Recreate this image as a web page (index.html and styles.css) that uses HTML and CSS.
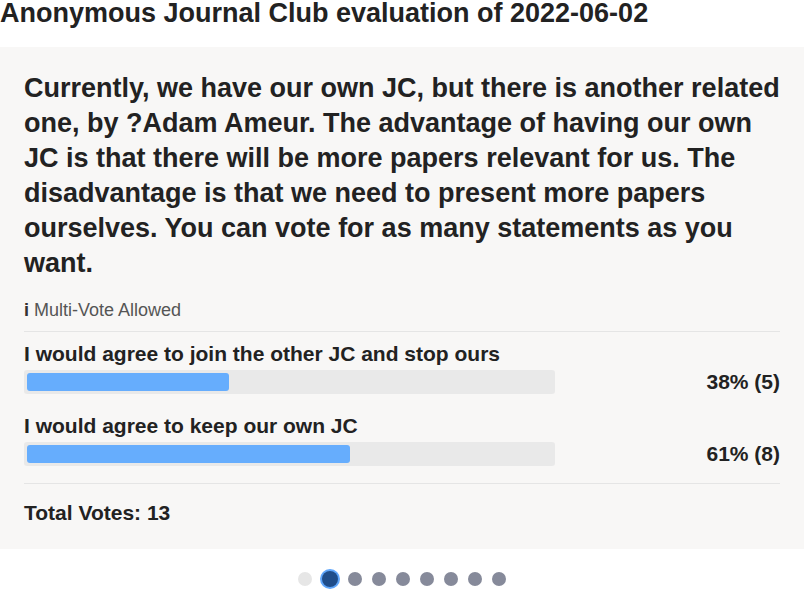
FILE: index.html
```html
<!DOCTYPE html>
<html>
<head>
<meta charset="utf-8">
<link rel="stylesheet" href="styles.css">
</head>
<body>
<h1 class="title">Anonymous Journal Club evaluation of 2022-06-02</h1>
<div class="card">
  <p class="question">Currently, we have our own JC, but there is another related one, by ?Adam Ameur. The advantage of having our own JC is that there will be more papers relevant for us. The disadvantage is that we need to present more papers ourselves. You can vote for as many statements as you want.</p>
  <div class="info"><b>i</b> Multi-Vote Allowed</div>
  <div class="options">
    <div class="option">
      <div class="label">I would agree to join the other JC and stop ours</div>
      <div class="row">
        <div class="bar"><div class="fill" style="width:38.46%"></div></div>
        <div class="pct">38% (5)</div>
      </div>
    </div>
    <div class="option">
      <div class="label">I would agree to keep our own JC</div>
      <div class="row">
        <div class="bar"><div class="fill" style="width:61.54%"></div></div>
        <div class="pct">61% (8)</div>
      </div>
    </div>
  </div>
  <div class="total">Total Votes: 13</div>
</div>
<div class="dots">
  <span class="dot first"></span>
  <span class="dot active"></span>
  <span class="dot"></span>
  <span class="dot"></span>
  <span class="dot"></span>
  <span class="dot"></span>
  <span class="dot"></span>
  <span class="dot"></span>
  <span class="dot"></span>
</div>
</body>
</html>
```
FILE: styles.css
```css
html, body {
  margin: 0;
  padding: 0;
  background: #ffffff;
  font-family: "Liberation Sans", Arial, sans-serif;
  color: #222222;
}
.title {
  margin: 0;
  font-size: 27px;
  line-height: 26px;
  font-weight: bold;
  height: 47px;
  white-space: nowrap;
}
.card {
  background: #f8f7f6;
  padding: 24px 24px 24px 24px;
}
.question {
  margin: 0;
  font-size: 27px;
  line-height: 35px;
  font-weight: bold;
}
.info {
  margin-top: 18px;
  font-size: 18px;
  line-height: 22px;
  color: #555555;
  padding-bottom: 10px;
  border-bottom: 1px solid #e5e5e5;
}
.info b {
  color: #333;
}
.options {
  padding: 9px 0 17px;
  border-bottom: 1px solid #e5e5e5;
}
.option + .option {
  margin-top: 19px;
}
.label {
  font-size: 21px;
  line-height: 26px;
  font-weight: bold;
  margin-bottom: 3px;
}
.row {
  display: flex;
  align-items: center;
}
.bar {
  width: 531px;
  height: 24px;
  background: #e9e9e9;
  border-radius: 3px;
  padding: 3px;
  box-sizing: border-box;
}
.fill {
  height: 100%;
  background: #66adfd;
  border-radius: 3px;
}
.pct {
  margin-left: auto;
  font-size: 21px;
  font-weight: bold;
  line-height: 24px;
}
.total {
  font-size: 21px;
  font-weight: bold;
  line-height: 24px;
  margin-top: 17px;
}
.dots {
  display: flex;
  justify-content: center;
  align-items: center;
  gap: 10px;
  height: 42px;
  padding-top: 18px;
  box-sizing: border-box;
}
.dot {
  width: 14px;
  height: 14px;
  border-radius: 50%;
  background: #868a9a;
}
.dot.first {
  background: #e6e6e6;
}
.dot.active {
  width: 16px;
  height: 16px;
  background: #1f4d8a;
  box-shadow: 0 0 0 2px #5fa6fb;
}
```
